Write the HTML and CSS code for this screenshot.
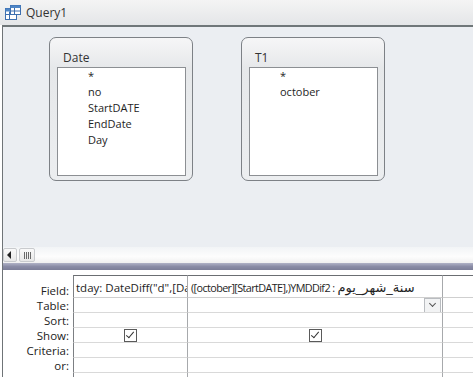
FILE: index.html
```html
<!DOCTYPE html>
<html lang="en">
<head>
    <meta charset="UTF-8">
    <meta name="viewport" content="width=device-width, initial-scale=1.0">
    <title>Query1</title>
    <link rel="stylesheet" href="styles.css">
</head>
<body>
    <div class="titlebar">
        <svg class="query-icon" width="16" height="15" viewBox="0 0 16 15">
            <rect x="0.5" y="3.5" width="11" height="11" fill="#fff" stroke="#3d6fb0"/>
            <rect x="0.5" y="3.5" width="11" height="3" fill="#4f86c6"/>
            <line x1="0.5" y1="9.5" x2="11.5" y2="9.5" stroke="#3d6fb0"/>
            <line x1="4.5" y1="6.5" x2="4.5" y2="14.5" stroke="#3d6fb0"/>
            <rect x="5.5" y="0.5" width="10" height="9" fill="#fff" stroke="#3d6fb0"/>
            <rect x="5.5" y="0.5" width="10" height="2.5" fill="#4f86c6"/>
            <line x1="5.5" y1="6" x2="15.5" y2="6" stroke="#3d6fb0"/>
            <line x1="9.5" y1="3" x2="9.5" y2="9.5" stroke="#3d6fb0"/>
        </svg>
        <span class="title">Query1</span>
    </div>
    <div class="window">
        <div class="design">
            <div class="table-box date-box">
                <div class="table-name">Date</div>
                <ul class="field-list">
                    <li>*</li>
                    <li>no</li>
                    <li>StartDATE</li>
                    <li>EndDate</li>
                    <li>Day</li>
                </ul>
            </div>
            <div class="table-box t1-box">
                <div class="table-name">T1</div>
                <ul class="field-list">
                    <li>*</li>
                    <li>october</li>
                </ul>
            </div>
        </div>
        <div class="hscroll">
            <div class="scroll-btn"><span class="arrow-left"></span></div>
            <div class="scroll-btn thumb"><span class="grip"></span></div>
        </div>
        <div class="splitter"></div>
        <div class="qbe">
            <div class="label">Field:</div>
            <div class="cell col1 top"><span class="cell-text">tday: DateDiff("d",[Da</span></div>
            <div class="cell col2 top"><span class="cell-text"><span class="latin">([october][StartDATE],)YMDDif2 :</span><span class="arabic" dir="rtl">سنة_شهر_يوم</span></span></div>
            <div class="cell col3 top"></div>

            <div class="label">Table:</div>
            <div class="cell col1"></div>
            <div class="cell col2"><span class="dropdown"></span></div>
            <div class="cell col3"></div>

            <div class="label">Sort:</div>
            <div class="cell col1"></div>
            <div class="cell col2"></div>
            <div class="cell col3"></div>

            <div class="label">Show:</div>
            <div class="cell col1 center"><span class="check"></span></div>
            <div class="cell col2 center"><span class="check"></span></div>
            <div class="cell col3"></div>

            <div class="label">Criteria:</div>
            <div class="cell col1"></div>
            <div class="cell col2"></div>
            <div class="cell col3"></div>

            <div class="label">or:</div>
            <div class="cell col1"></div>
            <div class="cell col2"></div>
            <div class="cell col3"></div>

            <div class="label"></div>
            <div class="cell col1 last"></div>
            <div class="cell col2 last"></div>
            <div class="cell col3 last"></div>
        </div>
    </div>
</body>
</html>
```

FILE: styles.css
```css
body {
    margin: 0;
    width: 473px;
    height: 377px;
    overflow: hidden;
    font-family: "Open Sans", "DejaVu Sans", sans-serif;
    font-size: 11px;
    color: #1e1e1e;
    background-color: #ffffff;
    display: flex;
    flex-direction: column;
}
.titlebar {
    height: 25px;
    flex-shrink: 0;
    display: flex;
    align-items: center;
    padding-left: 5px;
    background: linear-gradient(#f4f4f4, #e4e6e8);
}
.query-icon {
    margin-right: 5px;
    margin-top: -1px;
}
.title {
    font-size: 12px;
    color: #333;
}
.window {
    flex: 1;
    margin-left: 2px;
    border-left: 1px solid #6f7477;
    border-top: 2px solid #6f7779;
    display: flex;
    flex-direction: column;
}
.design {
    height: 220px;
    flex-shrink: 0;
    position: relative;
    background-color: #ebeef2;
}
.table-box {
    position: absolute;
    top: 10px;
    width: 144px;
    height: 144px;
    border: 1px solid #7d8186;
    border-radius: 7px;
    background: linear-gradient(#f6f6f7, #e6e8ea 30px, #eceef0);
    box-sizing: border-box;
    display: flex;
    flex-direction: column;
}
.date-box {
    left: 46px;
}
.t1-box {
    left: 238px;
}
.table-name {
    height: 29px;
    padding-top: 8px;
    line-height: 24px;
    box-sizing: border-box;
    padding-left: 13px;
    font-size: 12px;
    color: #333;
}
.field-list {
    list-style: none;
    margin: 0 6px 4px 7px;
    padding: 0 0 0 30px;
    flex: 1;
    background-color: #ffffff;
    border: 1px solid #8c8f93;
}
.field-list li {
    height: 16.1px;
    line-height: 15px;
    font-size: 11px;
}
.hscroll {
    height: 16px;
    flex-shrink: 0;
    display: flex;
    align-items: center;
    gap: 2px;
    background: linear-gradient(#f2f4f6, #fdfdfd 60%, #f0f0f0);
}
.scroll-btn {
    width: 14px;
    height: 14px;
    border: 1px solid #c9cbce;
    border-radius: 2px;
    background: linear-gradient(#fafafa, #e8e8e8);
    display: flex;
    align-items: center;
    justify-content: center;
    box-sizing: border-box;
}
.scroll-btn.thumb {
    width: 16px;
}
.arrow-left {
    width: 0;
    height: 0;
    border-top: 4px solid transparent;
    border-bottom: 4px solid transparent;
    border-right: 4px solid #222;
    margin-left: -2px;
}
.grip {
    width: 7px;
    height: 7px;
    background: repeating-linear-gradient(90deg, #6a6a6a 0 1px, transparent 1px 2px);
}
.splitter {
    height: 7px;
    flex-shrink: 0;
    background: linear-gradient(#b0b2c6, #8a8ca6 50%, #7c7e98);
}
.qbe {
    flex: 1;
    padding-top: 5px;
    display: grid;
    grid-template-columns: 70px 115px 255px 1fr;
    grid-template-rows: 23px 15px 15px 15px 15px 15px 1fr;
    background-color: #ffffff;
}
.label {
    text-align: right;
    padding-right: 4px;
    font-size: 11.5px;
    line-height: 15px;
    color: #222;
    display: flex;
    align-items: flex-end;
    justify-content: flex-end;
}
.cell {
    border-right: 1px solid #a7a9ac;
    border-bottom: 1px solid #d9d9d9;
    position: relative;
    overflow: hidden;
    white-space: nowrap;
}
.cell.col1 {
    border-left: 1px solid #7c7f83;
}
.cell.col3 {
    border-right: none;
}
.cell.top {
    border-top: 1px solid #6b6e72;
    border-bottom-color: #cfcfcf;
    display: flex;
    align-items: flex-end;
    padding-bottom: 2px;
}
.cell.last {
    border-bottom: none;
}
.cell-text {
    padding-left: 2px;
    font-size: 11.5px;
    line-height: 15px;
}
.col2 .cell-text {
    padding-left: 3px;
}
.latin {
    font-size: 10.8px;
    letter-spacing: -0.6px;
}
.arabic {
    font-family: "DejaVu Sans", sans-serif;
    font-size: 13px;
    padding-left: 3px;
}
.cell.center {
    display: flex;
    align-items: center;
    justify-content: center;
}
.check {
    width: 11px;
    height: 11px;
    border: 1px solid #5a5a5a;
    background-color: #fff;
    position: relative;
}
.check::after {
    content: "";
    position: absolute;
    left: 3px;
    top: 0;
    width: 3px;
    height: 7px;
    border-right: 1.5px solid #333;
    border-bottom: 1.5px solid #333;
    transform: rotate(40deg);
}
.dropdown {
    position: absolute;
    right: 1px;
    top: 0;
    width: 15px;
    height: 13px;
    border: 1px solid #b9bcc0;
    background-color: #f2f3f4;
}
.dropdown::after {
    content: "";
    position: absolute;
    left: 5px;
    top: 2px;
    width: 4px;
    height: 4px;
    border-right: 1px solid #555;
    border-bottom: 1px solid #555;
    transform: rotate(45deg);
}
```
